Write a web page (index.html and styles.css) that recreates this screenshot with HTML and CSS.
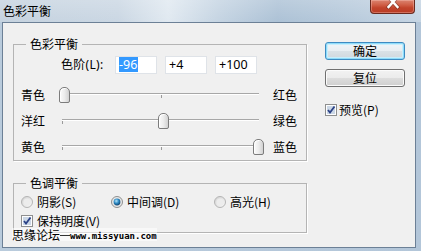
FILE: index.html
```html
<!DOCTYPE html>
<html lang="zh">
<head>
<meta charset="utf-8">
<title>色彩平衡</title>
<link rel="stylesheet" href="styles.css">
</head>
<body>
<div class="window">
  <div class="titlebar">
    <span class="title">色彩平衡</span>
    <div class="close">
      <svg width="45" height="14" viewBox="0 0 45 14">
        <path d="M18.5 -3 L27.5 7 M27.5 -3 L18.5 7" stroke="#5a2a22" stroke-width="4" stroke-linecap="square" opacity="0.45"/>
        <path d="M18.5 -3 L27.5 7 M27.5 -3 L18.5 7" stroke="#ffffff" stroke-width="2.4" stroke-linecap="square"/>
      </svg>
    </div>
  </div>
  <div class="client">
    <div class="main">
      <fieldset class="group g1">
        <legend>色彩平衡</legend>
        <div class="levels">
          <span class="levels-label">色阶(L):</span>
          <span class="input"><span class="sel">-96</span></span>
          <span class="input">+4</span>
          <span class="input">+100</span>
        </div>
        <div class="srow first">
          <span class="lbl">青色</span>
          <div class="slider"><div class="track"></div><div class="tick t-left"></div><div class="tick t-mid"></div><div class="thumb" style="left:0px"></div></div>
          <span class="lbl r">红色</span>
        </div>
        <div class="srow">
          <span class="lbl">洋红</span>
          <div class="slider"><div class="track"></div><div class="tick t-left"></div><div class="tick t-mid"></div><div class="thumb" style="left:99px"></div></div>
          <span class="lbl r">绿色</span>
        </div>
        <div class="srow">
          <span class="lbl">黄色</span>
          <div class="slider"><div class="track"></div><div class="tick t-left"></div><div class="tick t-mid"></div><div class="thumb" style="left:194px"></div></div>
          <span class="lbl r">蓝色</span>
        </div>
      </fieldset>
      <fieldset class="group g2">
        <legend>色调平衡</legend>
        <div class="radios">
          <span class="opt">
            <svg class="radio" width="12" height="12" viewBox="0 0 12 12"><defs><linearGradient id="rg" x1="0" y1="0" x2="1" y2="1"><stop offset="0" stop-color="#d0d0d0"/><stop offset="1" stop-color="#fafafa"/></linearGradient></defs><circle cx="6" cy="6" r="5.5" fill="url(#rg)" stroke="#b4b4b4"/><circle cx="6" cy="6" r="3.6" fill="#ececec"/></svg>
            阴影(S)
          </span>
          <span class="opt">
            <svg class="radio" width="12" height="12" viewBox="0 0 12 12"><defs><radialGradient id="rb" cx="0.4" cy="0.35" r="0.7"><stop offset="0" stop-color="#b7e6fb"/><stop offset="0.5" stop-color="#2d8ac4"/><stop offset="1" stop-color="#0f3c66"/></radialGradient></defs><circle cx="6" cy="6" r="5.5" fill="#e8e8e8" stroke="#8e8f8f"/><circle cx="6" cy="6" r="3.4" fill="url(#rb)"/></svg>
            中间调(D)
          </span>
          <span class="opt">
            <svg class="radio" width="12" height="12" viewBox="0 0 12 12"><circle cx="6" cy="6" r="5.5" fill="url(#rg)" stroke="#b4b4b4"/><circle cx="6" cy="6" r="3.6" fill="#ececec"/></svg>
            高光(H)
          </span>
        </div>
        <div class="chkrow">
          <svg class="cb" width="12" height="12" viewBox="0 0 12 12"><rect x="0.5" y="0.5" width="11" height="11" fill="#fdfdfd" stroke="#8e8f8f"/><rect x="2" y="2" width="8" height="8" fill="#cbd7e6"/><path d="M3 6 L5 8.5 L9.5 2.5" fill="none" stroke="#2c4286" stroke-width="1.8"/></svg>
          保持明度(V)
        </div>
      </fieldset>
    </div>
    <div class="side">
      <button class="btn default">确定</button>
      <button class="btn">复位</button>
      <div class="preview">
        <svg class="cb" width="12" height="12" viewBox="0 0 12 12"><rect x="0.5" y="0.5" width="11" height="11" fill="#fdfdfd" stroke="#8e8f8f"/><rect x="2" y="2" width="8" height="8" fill="#cbd7e6"/><path d="M3 6 L5 8.5 L9.5 2.5" fill="none" stroke="#2c4286" stroke-width="1.8"/></svg>
        预览(P)
      </div>
    </div>
    <div class="watermark"><span class="wm-cn">思缘论坛</span><span class="wm-dash"></span><span class="wm-url">www.missyuan.com</span></div>
  </div>
</div>
</body>
</html>
```
FILE: styles.css
```css
html, body {
  margin: 0;
  padding: 0;
}
body {
  width: 421px;
  height: 251px;
  overflow: hidden;
  background: linear-gradient(90deg, #b9cbdc, #b3c6d9);
  font: 12px/14px "Noto Sans", "Noto Sans CJK SC", sans-serif;
  color: #000;
}
.window {
  display: flex;
  flex-direction: column;
  height: 251px;
}
.titlebar {
  height: 22px;
  flex: none;
  display: flex;
  align-items: flex-start;
  background:
    linear-gradient(rgba(255,255,255,0.22), rgba(255,255,255,0.04)),
    linear-gradient(90deg, #c3d1de 0%, #c8d5e2 28%, #dfe8f0 40%, #c2d2e1 52%, #a9bfd4 66%, #b2c6d9 80%, #c3d3e2 100%);
}
.title {
  padding-left: 3px;
  line-height: 22px;
  font-size: 12px;
  font-family: "Noto Sans CJK SC", sans-serif;
}
.close {
  margin-left: auto;
  margin-right: 6px;
  width: 45px;
  height: 14px;
  box-sizing: border-box;
  border: 1px solid #6a2a1f;
  border-top: none;
  border-radius: 0 0 4px 4px;
  background: linear-gradient(#dc8470 0%, #cf5d45 40%, #c2442c 60%, #b93d25 100%);
  box-shadow: inset 0 0 0 1px rgba(255, 210, 200, 0.35);
  overflow: hidden;
}
.close svg {
  display: block;
  margin-left: -1px;
}
.client {
  flex: 1;
  margin: 0 5px 3px 2px;
  border: 1px solid #6c8096;
  background: #f0f0f0;
  display: flex;
  position: relative;
  padding-left: 10px;
}
.main {
  width: 294px;
  margin-top: 14px;
}
.side {
  margin-left: 18px;
  margin-top: 19px;
  width: 80px;
  display: flex;
  flex-direction: column;
}
.group {
  margin: 0;
  min-width: 0;
  border: 1px solid #b4b4b4;
  box-shadow: 1px 1px 0 #ffffff;
}
.group legend {
  margin-left: 12px;
  padding: 0 4px;
  line-height: 14px;
  font-family: "Noto Sans CJK SC", sans-serif;
}
.g1 {
  padding: 5px 0 1px 0;
}
.g2 {
  margin-top: 15px;
  padding: 4px 0 3px 0;
}
.levels {
  display: flex;
  align-items: center;
  height: 18px;
  padding-left: 47px;
}
.levels-label {
  width: 48px;
  margin-right: 6px;
  letter-spacing: 0.3px;
}
.input {
  width: 42px;
  height: 18px;
  box-sizing: border-box;
  border: 1px solid #dfe3e8;
  background: #fff;
  padding-left: 3px;
  margin-right: 8px;
  line-height: 16px;
  font-family: "Noto Sans", sans-serif;
  font-size: 12.5px;
}
.sel {
  display: inline-block;
  background: #3399ff;
  color: #fff;
  line-height: 15px;
  padding-right: 1px;
  vertical-align: top;
}
.srow {
  display: flex;
  align-items: center;
  height: 26px;
  padding-left: 7px;
}
.srow.first {
  margin-top: 7px;
}
.lbl {
  width: 38px;
  font-family: "Noto Sans CJK SC", sans-serif;
  padding-top: 2px;
}
.lbl.r {
  margin-left: 9px;
  width: auto;
}
.slider {
  position: relative;
  width: 205px;
  height: 26px;
}
.track {
  position: absolute;
  left: 3px;
  right: 5px;
  top: 12px;
  height: 0;
  border-top: 1px solid #a7a7a7;
  border-bottom: 1px solid #ffffff;
}
.tick {
  position: absolute;
  top: 14px;
  width: 1px;
  height: 3px;
  background: #9a9a9a;
}
.t-left { left: 3px; }
.t-mid { left: 102px; }
.thumb {
  position: absolute;
  top: 6px;
  width: 11px;
  height: 16px;
  box-sizing: border-box;
  border: 1px solid #7c7c7c;
  border-radius: 5px 5px 2px 2px;
  background: linear-gradient(90deg, #fbfbfb 0%, #ececec 50%, #d2d2d2 100%);
  box-shadow: inset 1px 1px 0 #ffffff;
}
.radios {
  display: grid;
  grid-template-columns: 90px 103px auto;
  align-items: center;
  height: 16px;
  padding-left: 7px;
}
.opt, .chkrow, .preview {
  display: flex;
  align-items: center;
  gap: 4px;
  font-family: "Noto Sans CJK SC", sans-serif;
}
.chkrow {
  margin-top: 3px;
  height: 16px;
  padding-left: 7px;
}
.radio, .cb {
  flex: none;
  display: block;
}
.btn {
  width: 80px;
  height: 18px;
  box-sizing: border-box;
  padding: 0;
  border: 1px solid #707070;
  border-radius: 3px;
  background: linear-gradient(#f2f2f2 0%, #ebebeb 50%, #dddddd 50%, #cfcfcf 100%);
  box-shadow: inset 0 0 0 1px #fbfbfb;
  font: 12px/16px "Noto Sans CJK SC", sans-serif;
  color: #000;
}
.btn.default {
  border-color: #3d8bc2;
  background: linear-gradient(#f1f5f8 0%, #e8eef2 50%, #dae2e7 50%, #cfd8de 100%);
  box-shadow: inset 0 0 0 1px #8fdcfa, inset 0 0 0 2px #c9eefc;
}
.btn + .btn {
  margin-top: 9px;
}
.preview {
  margin-top: 16px;
  height: 14px;
  gap: 2px;
}
.watermark {
  position: absolute;
  left: 9px;
  top: 205px;
  display: flex;
  align-items: center;
  height: 13px;
  background: rgba(255, 255, 255, 0.5);
}
.wm-cn {
  font: 12px/13px "Noto Sans CJK SC", sans-serif;
}
.wm-dash {
  width: 10px;
  height: 1px;
  background: #333;
  margin-top: 1px;
}
.wm-url {
  font: bold 9px/13px "DejaVu Sans Mono", monospace;
  padding-top: 3px;
}
```
